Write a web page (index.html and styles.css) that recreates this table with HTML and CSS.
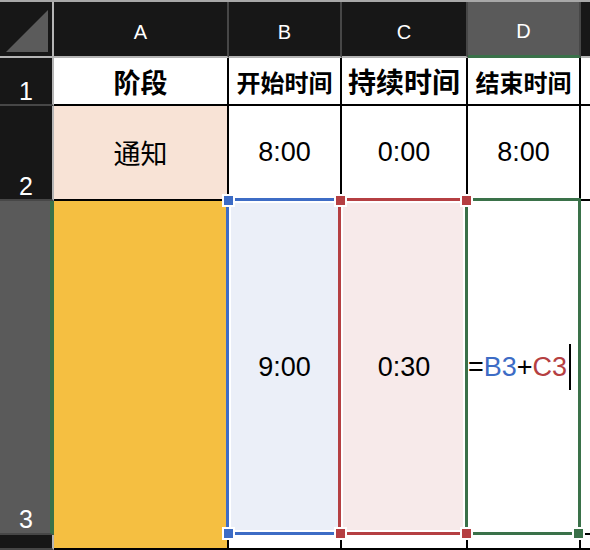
FILE: index.html
```html
<!DOCTYPE html>
<html lang="zh">
<head>
<meta charset="utf-8">
<title>Sheet</title>
<link rel="stylesheet" href="styles.css">
</head>
<body>
<div class="wrap">
  <div class="sheet">
    <div class="corner"><svg class="tri" width="52" height="54" viewBox="0 0 52 54"><polygon points="6,50 48,8 48,50" fill="#5b5b5b"/></svg></div>
    <div class="ch">A</div>
    <div class="ch">B</div>
    <div class="ch">C</div>
    <div class="ch sel">D</div>
    <div class="ch last"></div>

    <div class="rh">1</div>
    <div class="c hd s27">阶段</div>
    <div class="c hd s24">开始时间</div>
    <div class="c hd s28">持续时间</div>
    <div class="c hd s24 med">结束时间</div>
    <div class="c last"></div>

    <div class="rh">2</div>
    <div class="c cjk peach">通知</div>
    <div class="c">8:00</div>
    <div class="c">0:00</div>
    <div class="c">8:00</div>
    <div class="c last"></div>

    <div class="rh sel">3</div>
    <div class="c yellow span2"></div>
    <div class="c bluefill">9:00</div>
    <div class="c redfill">0:30</div>
    <div class="c formula"><span>=</span><span class="ref-b">B3</span><span>+</span><span class="ref-c">C3</span><span class="caret"></span></div>
    <div class="c last"></div>

    <div class="rh"></div>
    <div class="c"></div>
    <div class="c"></div>
    <div class="c"></div>
    <div class="c last"></div>
  </div>

  <div class="range blue"></div>
  <div class="range red"></div>
  <div class="range green"></div>

  <div class="handle hb" style="left:222px;top:194px"></div>
  <div class="handle hb" style="left:222px;top:527px"></div>
  <div class="handle hr" style="left:334px;top:194px"></div>
  <div class="handle hr" style="left:460px;top:194px"></div>
  <div class="handle hr" style="left:334px;top:527px"></div>
  <div class="handle hr" style="left:460px;top:527px"></div>
  <div class="handle hg" style="left:572px;top:527px"></div>
</div>
</body>
</html>
```

FILE: styles.css
```css
html, body {
  margin: 0;
  padding: 0;
  background: #fff;
}
body {
  width: 590px;
  height: 550px;
  overflow: hidden;
}
.wrap {
  position: relative;
  width: 590px;
  height: 550px;
  overflow: hidden;
}
.sheet {
  display: grid;
  grid-template-columns: 54px 175px 113px 126px 113px 9px;
  grid-template-rows: 56px 48px 95px 334px 15px;
  border-top: 2px solid #a8a8a8;
  font-family: "Liberation Sans", Arial, "Noto Sans CJK SC", sans-serif;
}
.sheet > div {
  box-sizing: border-box;
  min-width: 0;
  overflow: hidden;
}
.corner {
  background: #171717;
  border-right: 2px solid #b5b5b5;
  border-bottom: 2px solid #b5b5b5;
}
.tri {
  display: block;
}
.ch {
  background: #171717;
  color: #fff;
  font-size: 20px;
  line-height: 20px;
  border-right: 2px solid #474747;
  border-bottom: 2px solid #b5b5b5;
  display: flex;
  align-items: center;
  justify-content: center;
  padding-top: 5px;
}
.ch.sel {
  background: #5a5a5a;
  border-bottom: 3px solid #3a7149;
}
.ch.last {
  border-right: none;
}
.rh {
  background: #171717;
  color: #fff;
  font-size: 25px;
  line-height: 25px;
  border-right: 2px solid #b5b5b5;
  border-bottom: 2px solid #474747;
  display: flex;
  align-items: flex-end;
  justify-content: center;
  padding-bottom: 0;
}
.rh.sel {
  background: #5a5a5a;
  border-right: 4px solid #3a7149;
  padding-left: 2px;
  padding-bottom: 1px;
}
.c {
  background: #fff;
  color: #000;
  border-right: 2px solid #000;
  border-bottom: 2px solid #000;
  display: flex;
  align-items: center;
  justify-content: center;
  font-size: 27px;
  white-space: nowrap;
}
.c.last {
  border-right: none;
}
.hd {
  font-family: "Noto Sans CJK SC", sans-serif;
  font-weight: 700;
}
.s24 { font-size: 24px; }
.s27 { font-size: 27px; }
.s28 { font-size: 28px; }
.med { font-weight: 700; }
.cjk {
  font-family: "Noto Sans CJK SC", sans-serif;
  font-size: 27px;
}
.peach { background: #f8e3d6; }
.yellow { background: #f5bf41; }
.span2 { grid-row: span 2; }
.bluefill { background: #ebeff8; }
.redfill { background: #f7eaea; }
.formula {
  justify-content: flex-start;
  font-size: 27px;
}
.ref-b { color: #3d6cc5; }
.ref-c { color: #b53f42; }
.caret {
  display: inline-block;
  width: 2px;
  height: 46px;
  background: #000;
  margin-left: 2px;
}
.range {
  position: absolute;
  box-sizing: border-box;
  top: 198px;
  height: 337px;
  border: 3px solid;
  box-shadow: inset 0 0 0 2px #fff;
}
.range.blue {
  left: 226px;
  width: 117px;
  border-color: #3d6cc5;
}
.range.red {
  left: 338px;
  width: 130px;
  border-color: #b53f42;
}
.range.green {
  left: 465px;
  width: 116px;
  border-color: #3a7149;
  box-shadow: none;
}
.handle {
  position: absolute;
  box-sizing: border-box;
  width: 13px;
  height: 13px;
  border: 2px solid #fff;
}
.hb { background: #3d6cc5; }
.hr { background: #b53f42; }
.hg { background: #3a7149; }
```
